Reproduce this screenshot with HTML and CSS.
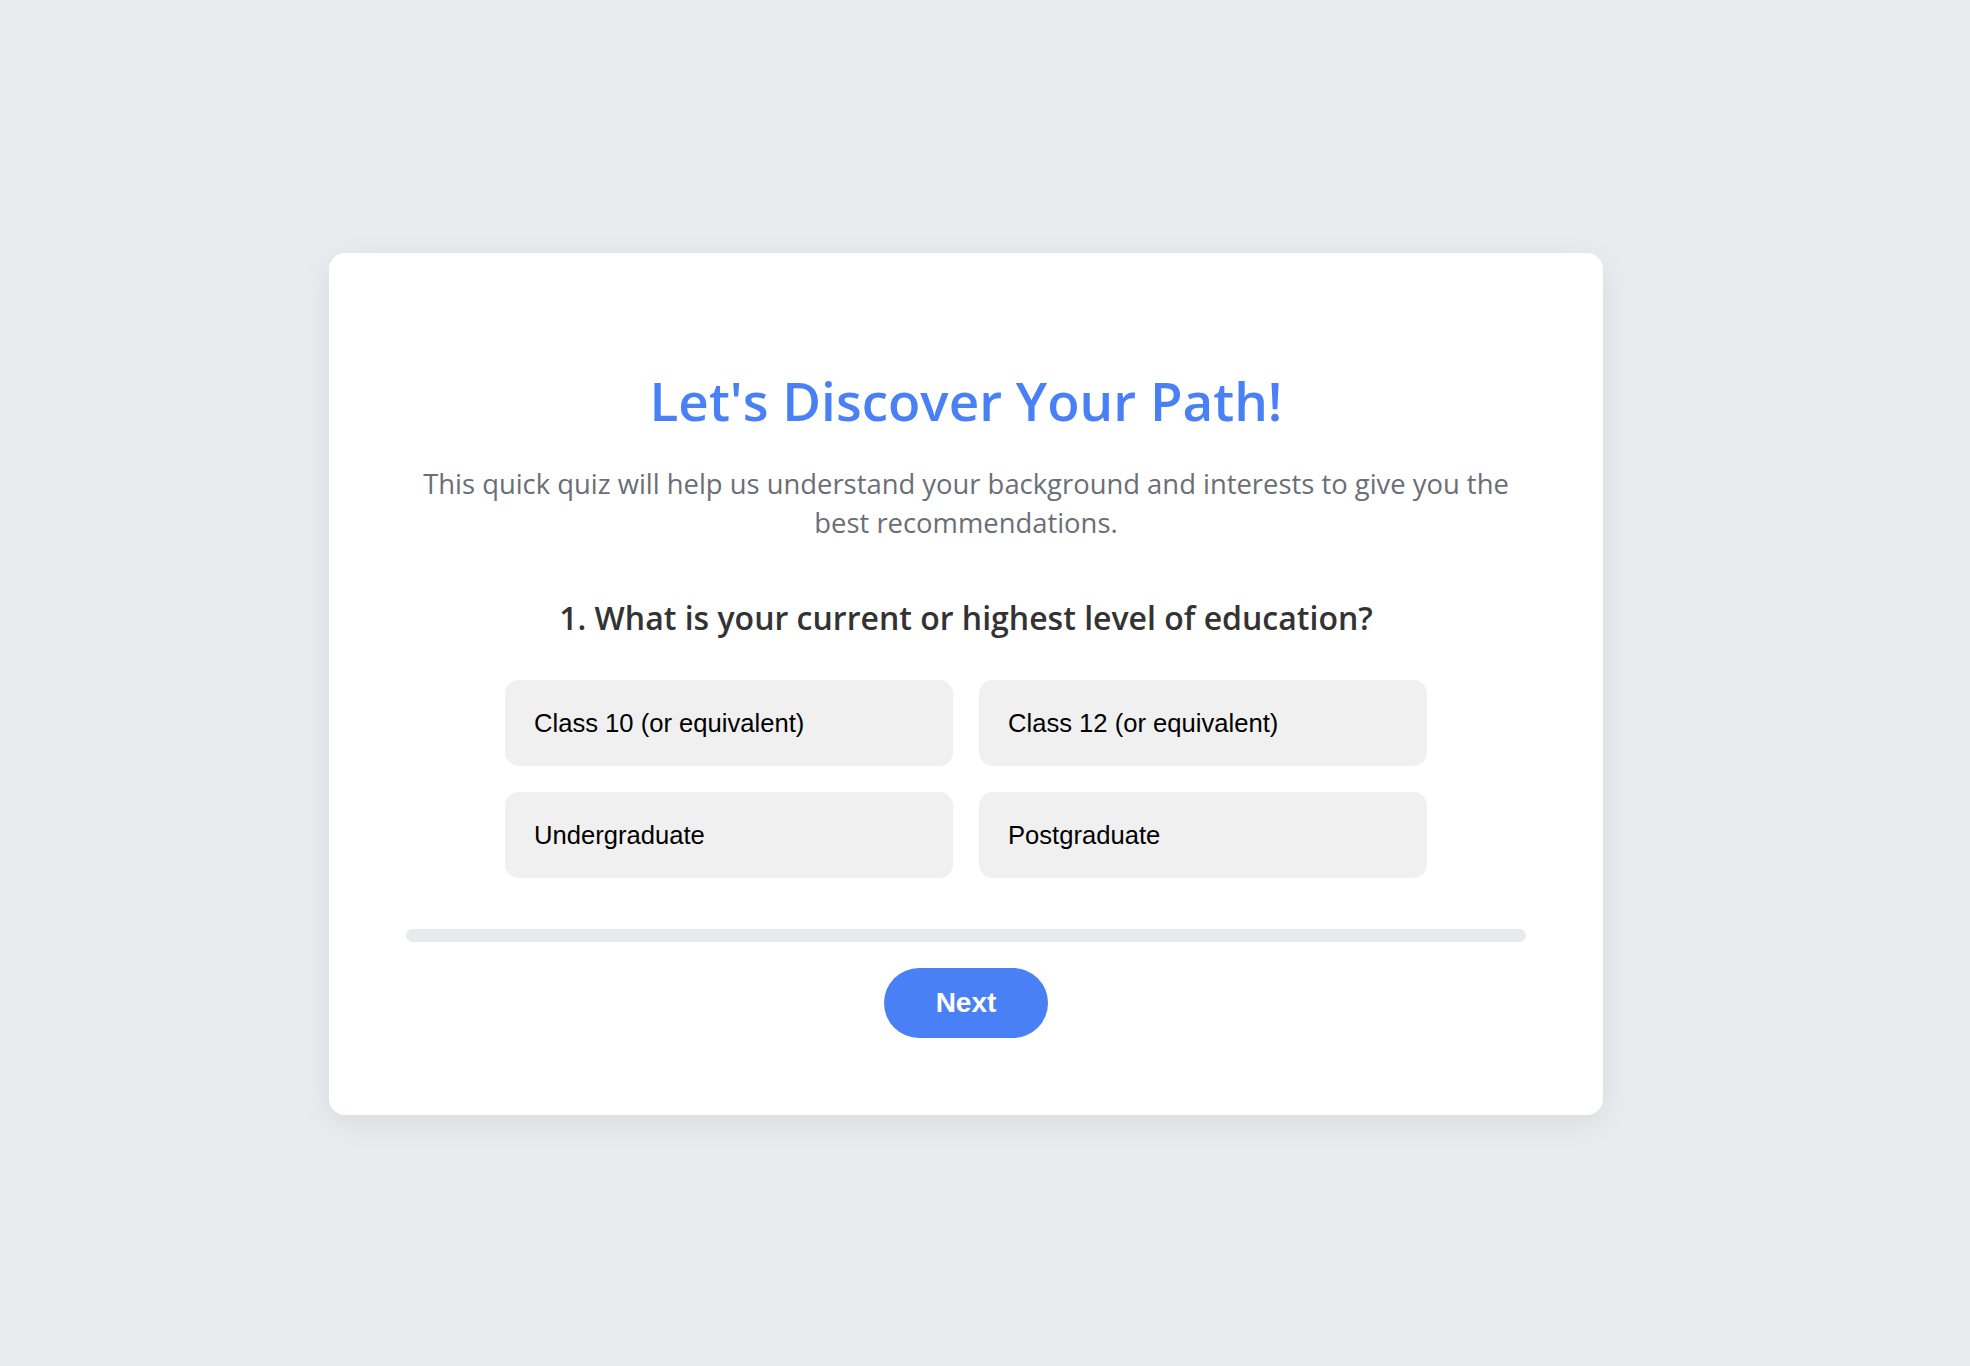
FILE: index.html
```html
<!DOCTYPE html>
<html lang="en">
<head>
<meta charset="utf-8">
<title>Career Quiz</title>
<link rel="stylesheet" href="styles.css">
</head>
<body>
<main class="card">
  <h1 class="title">Let's Discover Your Path!</h1>
  <p class="intro">This quick quiz will help us understand your background and interests to give you the best recommendations.</p>
  <h2 class="question">1. What is your current or highest level of education?</h2>
  <div class="options">
    <button class="option">Class 10 (or equivalent)</button>
    <button class="option">Class 12 (or equivalent)</button>
    <button class="option">Undergraduate</button>
    <button class="option">Postgraduate</button>
  </div>
  <div class="progress"><div class="progress-fill" style="width: 0%"></div></div>
  <div class="actions">
    <button class="next">Next</button>
  </div>
</main>
</body>
</html>
```
FILE: styles.css
```css
html, body {
  margin: 0;
  padding: 0;
}
body {
  background: #eaebee;
  min-height: 1366px;
  display: flex;
  align-items: center;
  justify-content: center;
  padding: 2px 38px 0 0;
  box-sizing: border-box;
  font-family: "Open Sans", "Noto Sans", sans-serif;
}
.card {
  width: 1274px;
  box-sizing: border-box;
  background: #ffffff;
  border-radius: 16px;
  padding: 77px;
  box-shadow: 0 8px 30px rgba(0, 0, 0, 0.07);
  text-align: center;
}
.title {
  margin: 38px 0 30px;
  font-size: 53px;
  line-height: 66px;
  font-weight: 600;
  color: #4a80f5;
}
.intro {
  margin: 0 auto;
  font-size: 27.4px;
  line-height: 39px;
  color: #6b6e75;
  font-weight: 400;
}
.question {
  margin: 55px 0 41px;
  font-size: 32px;
  line-height: 42px;
  font-weight: 600;
  color: #333333;
}
.options {
  display: grid;
  grid-template-columns: 1fr 1fr;
  gap: 26px;
  max-width: 922px;
  margin: 0 auto;
}
.option {
  height: 86px;
  border: none;
  border-radius: 14px;
  background: #f0f0f0;
  padding: 0 29px;
  text-align: left;
  font-family: "Liberation Sans", Arial, sans-serif;
  font-size: 25.6px;
  color: #000000;
}
.progress {
  margin-top: 51px;
  height: 13px;
  border-radius: 7px;
  background: #e9eaee;
  overflow: hidden;
}
.progress-fill {
  height: 100%;
  background: #4a80f5;
}
.actions {
  margin-top: 26px;
  display: flex;
  justify-content: center;
}
.next {
  width: 164px;
  height: 70px;
  border: none;
  border-radius: 35px;
  background: #4a80f5;
  color: #ffffff;
  font-family: "Liberation Sans", Arial, sans-serif;
  font-weight: 700;
  font-size: 28px;
}
```
